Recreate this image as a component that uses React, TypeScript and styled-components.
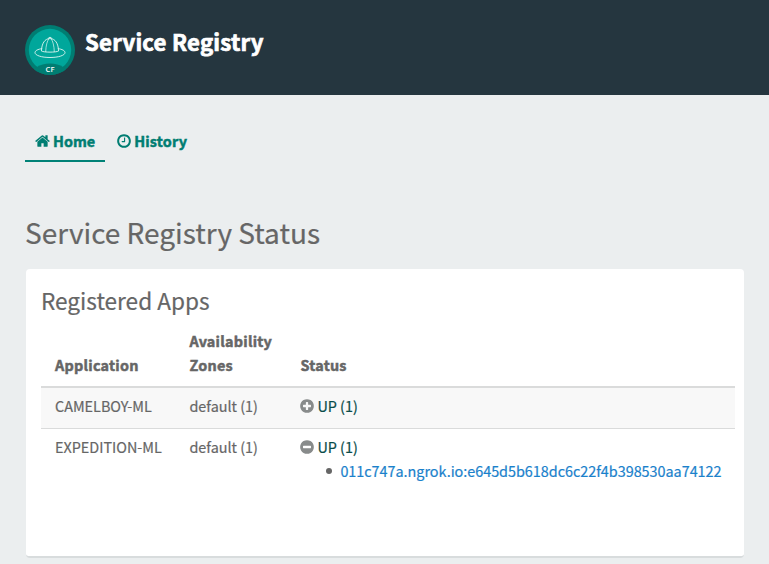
import React from "react";
import styled, { createGlobalStyle } from "styled-components";

const GlobalStyle = createGlobalStyle`
  * { box-sizing: border-box; }
  body {
    margin: 0;
    background: #ebeeef;
    color: #666;
    font-family: "Noto Sans CJK SC", "Noto Sans", sans-serif;
    font-size: 14.4px;
    line-height: 24px;
    overflow: hidden;
    -webkit-text-stroke: 0.2px;
  }
`;

const Header = styled.header`
  display: flex;
  align-items: flex-start;
  gap: 10px;
  height: 95px;
  padding: 25px 25px 0;
  background: #25363f;
`;

const Logo = styled.svg`
  width: 50px;
  height: 50px;
  flex: none;
  -webkit-text-stroke: 0;
`;

const Brand = styled.h1`
  margin: 0;
  padding-top: 1px;
  color: #fff;
  font-size: 22.2px;
  line-height: 30px;
  font-weight: 700;
  letter-spacing: 0.22px;
  white-space: nowrap;
  -webkit-text-stroke: 0.7px;
`;

const Nav = styled.nav`
  display: flex;
  gap: 2px;
  padding: 27px 25px 0;
`;

const Tab = styled.a<{ $active?: boolean }>`
  display: flex;
  align-items: center;
  gap: 3px;
  height: 40px;
  padding: 0 10px;
  color: #007d72;
  font-weight: 700;
  letter-spacing: ${(p) => (p.$active ? "0" : "0.2px")};
  white-space: nowrap;
  border-bottom: 2px solid ${(p) => (p.$active ? "#008277" : "transparent")};
  -webkit-text-stroke: 0.5px;
`;

const Glyph = styled.svg<{ $width: number }>`
  width: ${(p) => p.$width}px;
  height: 16px;
  flex: none;
  fill: currentColor;
`;

const Main = styled.main`
  padding: 50px 25px 0 26px;
`;

const Title = styled.h2`
  margin: 0 0 17px -1px;
  font-size: 28px;
  line-height: 40px;
  font-weight: 400;
  white-space: nowrap;
`;

const Card = styled.section`
  height: 289px;
  padding: 17px 9px 0 15px;
  background: #fff;
  border-bottom: 2px solid #d8dcdd;
  border-radius: 4px;
`;

const CardTitle = styled.h3`
  margin: 0 0 13px;
  font-size: 22.6px;
  line-height: 30px;
  font-weight: 400;
`;

const Table = styled.div`
  display: flex;
  flex-direction: column;
`;

const Row = styled.div<{ $striped?: boolean }>`
  display: grid;
  grid-template-columns: 134.4px 111px 1fr;
  padding: 6px 0 10px 14px;
  background: ${(p) => (p.$striped ? "#f8f8f8" : "transparent")};
  border-bottom: ${(p) => (p.$striped ? "1px solid #dadbdb" : "0")};
`;

const HeadRow = styled(Row)`
  align-items: end;
  padding: 0 0 9px 14px;
  font-weight: 700;
  letter-spacing: 0.25px;
  border-bottom: 2px solid #dadbdb;
  -webkit-text-stroke: 0.5px;
`;

const Cell = styled.div`
  white-space: nowrap;
`;

const HeadCell = styled(Cell)`
  white-space: pre-line;
`;

const Status = styled.div`
  display: flex;
  align-items: center;
  gap: 3px;
  color: #094c49;
`;

const Toggle = styled(Glyph)`
  color: #888b8b;
`;

const Instances = styled.ul`
  margin: 0;
  padding: 0 0 0 29px;
  list-style: none;
`;

const Instance = styled.li`
  display: flex;
  align-items: center;
  gap: 8px;

  &::before {
    content: "";
    width: 6px;
    height: 6px;
    margin-left: -3px;
    border-radius: 50%;
    background: #666;
  }
`;

const InstanceLink = styled.a`
  color: #1a81cb;
  letter-spacing: -0.02px;
`;

const DISC =
  "M1536 896q0 209-103 385.5t-279.5 279.5-385.5 103-385.5-103-279.5-279.5-103-385.5 103-385.5 279.5-279.5 385.5-103 385.5 103 279.5 279.5 103 385.5z";
const PLUS =
  "M1216 960v-128q0-26-19-45t-45-19h-256v-256q0-26-19-45t-45-19h-128q-26 0-45 19t-19 45v256h-256q-26 0-45 19t-19 45v128q0 26 19 45t45 19h256v256q0 26 19 45t45 19h128q26 0 45-19t19-45v-256h256q26 0 45-19t19-45z";
const MINUS =
  "M1216 960v-128q0-26-19-45t-45-19h-768q-26 0-45 19t-19 45v128q0 26 19 45t45 19h768q26 0 45-19t19-45z";

const HomeIcon = () => (
  <Glyph $width={15} viewBox="0 0 1664 1792">
    <path d="M1408 992v480q0 26-19 45t-45 19h-384v-384h-256v384h-384q-26 0-45-19t-19-45v-480q0-1 .5-3t.5-3l575-474 575 474q1 2 1 6zm223-69l-62 74q-8 9-21 11h-3q-13 0-21-7l-692-577-692 577q-12 8-24 7-13-2-21-11l-62-74q-8-10-7-23.5t11-21.5l719-599q32-26 76-26t76 26l244 204v-195q0-14 9-23t23-9h192q14 0 23 9t9 23v408l219 182q10 8 11 21.5t-7 23.5z" />
  </Glyph>
);

const ClockIcon = () => (
  <Glyph $width={14} viewBox="0 0 1536 1792">
    <path d="M896 544v448q0 14-9 23t-23 9h-320q-14 0-23-9t-9-23v-64q0-14 9-23t23-9h224v-352q0-14 9-23t23-9h64q14 0 23 9t9 23zm416 352q0-148-73-273t-198-198-273-73-273 73-198 198-73 273 73 273 198 198 273 73 273-73 198-198 73-273zm224 0q0 209-103 385.5t-279.5 279.5-385.5 103-385.5-103-279.5-279.5-103-385.5 103-385.5 279.5-279.5 385.5-103 385.5 103 279.5 279.5 103 385.5z" />
  </Glyph>
);

const HatLogo = () => (
  <Logo viewBox="0 0 50 50">
    <defs>
      <clipPath id="badge">
        <circle cx="25" cy="25" r="25" />
      </clipPath>
    </defs>
    <circle cx="25" cy="25" r="25" fill="#007d72" />
    <circle cx="25" cy="25" r="21.2" fill="#00a79b" />
    <ellipse cx="25" cy="51" rx="19" ry="12.4" fill="#007d72" clipPath="url(#badge)" />
    <g fill="none" stroke="#dff5f2" strokeWidth="0.9">
      <path d="M17.2 23.6C12.8 24.2 10 25.7 10 27.6c0 2.800 6.600 4.900 15 4.900s15-2.100 15-4.900c0-1.900-2.800-3.400-7.200-4" />
      <path d="M16.400 26C16.800 18.500 19.600 13.600 25 13.600s8.200 4.900 8.600 12.400c-2.300 1.500-14.900 1.500-17.200 0z" />
      <path d="M20.700 26.900c.2-6 1.300-10.700 3.300-13.300M29.300 26.900c-.2-6-1.300-10.700-3.300-13.300" strokeWidth="0.7" />
      <path d="M23.300 13.600c0-1.700 3.400-1.700 3.400 0" />
    </g>
    <text
      x="25"
      y="46.700"
      textAnchor="middle"
      fill="#fff"
      fontFamily="Open Sans, sans-serif"
      fontSize="7.600"
      fontWeight="600"
    >
      CF
    </text>
  </Logo>
);

const apps = [
  { name: "CAMELBOY-ML", zones: "default (1)", status: "UP (1)", instances: [] as string[] },
  {
    name: "EXPEDITION-ML",
    zones: "default (1)",
    status: "UP (1)",
    instances: ["011c747a.ngrok.io:e645d5b618dc6c22f4b398530aa74122"],
  },
];

export default function App() {
  return (
    <>
      <GlobalStyle />
      <Header>
        <HatLogo />
        <Brand>Service Registry</Brand>
      </Header>
      <Nav>
        <Tab $active>
          <HomeIcon />
          Home
        </Tab>
        <Tab>
          <ClockIcon />
          History
        </Tab>
      </Nav>
      <Main>
        <Title>Service Registry Status</Title>
        <Card>
          <CardTitle>Registered Apps</CardTitle>
          <Table>
            <HeadRow>
              <HeadCell>Application</HeadCell>
              <HeadCell>{"Availability\nZones"}</HeadCell>
              <HeadCell>Status</HeadCell>
            </HeadRow>
            {apps.map((app, i) => (
              <Row key={app.name} $striped={i % 2 === 0}>
                <Cell>{app.name}</Cell>
                <Cell>{app.zones}</Cell>
                <Cell>
                  <Status>
                    <Toggle $width={14} viewBox="0 0 1536 1792">
                      <path fillRule="evenodd" d={DISC + (app.instances.length ? MINUS : PLUS)} />
                    </Toggle>
                    {app.status}
                  </Status>
                  {app.instances.length > 0 && (
                    <Instances>
                      {app.instances.map((id) => (
                        <Instance key={id}>
                          <InstanceLink>{id}</InstanceLink>
                        </Instance>
                      ))}
                    </Instances>
                  )}
                </Cell>
              </Row>
            ))}
          </Table>
        </Card>
      </Main>
    </>
  );
}
